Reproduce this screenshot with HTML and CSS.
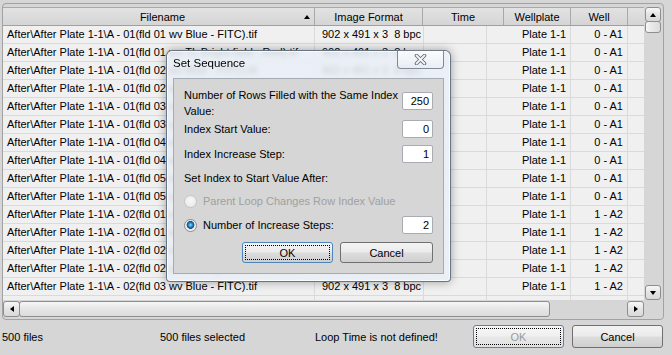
FILE: index.html
```html
<!DOCTYPE html>
<html lang="en">
<head>
  <meta charset="UTF-8">
  <title>Set Sequence</title>
  <link rel="stylesheet" href="styles.css">
</head>
<body>
  <div class="window">

    <div class="table-box">
      <div class="table-view">
        <div class="head">
          <div class="sorted"><span class="head-text">Filename</span><span class="tri-up"></span></div>
          <div>Image Format</div>
          <div>Time</div>
          <div>Wellplate</div>
          <div>Well</div>
          <div class="filler"></div>
        </div>

        <div class="row"><div>After\After Plate 1-1\A - 01(fld 01 wv Blue - FITC).tif</div><div class="fmt">902 x 491 x 3  8 bpc</div><div></div><div class="num">Plate 1-1</div><div class="num">0 - A1</div><div></div></div>
        <div class="row"><div>After\After Plate 1-1\A - 01(fld 01 wv TL Bright field - Red).tif</div><div class="fmt">902 x 491 x 3  8 bpc</div><div></div><div class="num">Plate 1-1</div><div class="num">0 - A1</div><div></div></div>
        <div class="row"><div>After\After Plate 1-1\A - 01(fld 02 wv Blue - FITC).tif</div><div class="fmt">902 x 491 x 3  8 bpc</div><div></div><div class="num">Plate 1-1</div><div class="num">0 - A1</div><div></div></div>
        <div class="row"><div>After\After Plate 1-1\A - 01(fld 02 wv TL Bright field - Red).tif</div><div class="fmt">902 x 491 x 3  8 bpc</div><div></div><div class="num">Plate 1-1</div><div class="num">0 - A1</div><div></div></div>
        <div class="row"><div>After\After Plate 1-1\A - 01(fld 03 wv Blue - FITC).tif</div><div class="fmt">902 x 491 x 3  8 bpc</div><div></div><div class="num">Plate 1-1</div><div class="num">0 - A1</div><div></div></div>
        <div class="row"><div>After\After Plate 1-1\A - 01(fld 03 wv TL Bright field - Red).tif</div><div class="fmt">902 x 491 x 3  8 bpc</div><div></div><div class="num">Plate 1-1</div><div class="num">0 - A1</div><div></div></div>
        <div class="row"><div>After\After Plate 1-1\A - 01(fld 04 wv Blue - FITC).tif</div><div class="fmt">902 x 491 x 3  8 bpc</div><div></div><div class="num">Plate 1-1</div><div class="num">0 - A1</div><div></div></div>
        <div class="row"><div>After\After Plate 1-1\A - 01(fld 04 wv TL Bright field - Red).tif</div><div class="fmt">902 x 491 x 3  8 bpc</div><div></div><div class="num">Plate 1-1</div><div class="num">0 - A1</div><div></div></div>
        <div class="row"><div>After\After Plate 1-1\A - 01(fld 05 wv Blue - FITC).tif</div><div class="fmt">902 x 491 x 3  8 bpc</div><div></div><div class="num">Plate 1-1</div><div class="num">0 - A1</div><div></div></div>
        <div class="row"><div>After\After Plate 1-1\A - 01(fld 05 wv TL Bright field - Red).tif</div><div class="fmt">902 x 491 x 3  8 bpc</div><div></div><div class="num">Plate 1-1</div><div class="num">0 - A1</div><div></div></div>
        <div class="row"><div>After\After Plate 1-1\A - 02(fld 01 wv Blue - FITC).tif</div><div class="fmt">902 x 491 x 3  8 bpc</div><div></div><div class="num">Plate 1-1</div><div class="num">1 - A2</div><div></div></div>
        <div class="row"><div>After\After Plate 1-1\A - 02(fld 01 wv TL Bright field - Red).tif</div><div class="fmt">902 x 491 x 3  8 bpc</div><div></div><div class="num">Plate 1-1</div><div class="num">1 - A2</div><div></div></div>
        <div class="row"><div>After\After Plate 1-1\A - 02(fld 02 wv Blue - FITC).tif</div><div class="fmt">902 x 491 x 3  8 bpc</div><div></div><div class="num">Plate 1-1</div><div class="num">1 - A2</div><div></div></div>
        <div class="row"><div>After\After Plate 1-1\A - 02(fld 02 wv TL Bright field - Red).tif</div><div class="fmt">902 x 491 x 3  8 bpc</div><div></div><div class="num">Plate 1-1</div><div class="num">1 - A2</div><div></div></div>
        <div class="row"><div>After\After Plate 1-1\A - 02(fld 03 wv Blue - FITC).tif</div><div class="fmt">902 x 491 x 3  8 bpc</div><div></div><div class="num">Plate 1-1</div><div class="num">1 - A2</div><div></div></div>
        <div class="row"><div></div><div class="fmt"></div><div></div><div class="num"></div><div class="num"></div><div></div></div>
      </div>

      <div class="vscroll">
        <div class="sb-btn v-btn"><span class="tri-up"></span></div>
        <div class="sb-thumb v-thumb"></div>
        <div class="sb-track"></div>
        <div class="sb-btn v-btn"><span class="tri-down"></span></div>
      </div>

      <div class="hscroll">
        <div class="sb-btn h-btn"><span class="tri-left"></span></div>
        <div class="sb-thumb h-thumb"></div>
        <div class="sb-track"></div>
        <div class="sb-btn h-btn"><span class="tri-right"></span></div>
      </div>
      <div class="corner"></div>
    </div>

    <div class="footer">
      <span class="count">500 files</span>
      <span class="selected">500 files selected</span>
      <span class="status">Loop Time is not defined!</span>
      <button class="btn btn-default" disabled><span class="focus">OK</span></button>
      <button class="btn">Cancel</button>
    </div>

    <!-- modal dialog on top of the table -->
    <div class="dialog">
      <div class="title-bar">
        <span class="title">Set Sequence</span>
        <div class="close-btn">
          <svg width="13" height="11" viewBox="0 0 13 11">
            <path d="M2.5 1.5 L10.5 9.5 M10.5 1.5 L2.5 9.5" stroke="#5f6b76" stroke-width="3.6" stroke-linecap="round"/>
            <path d="M2.5 1.5 L10.5 9.5 M10.5 1.5 L2.5 9.5" stroke="#f4f6f8" stroke-width="1.8" stroke-linecap="round"/>
          </svg>
        </div>
      </div>

      <div class="client">
        <div class="field two">
          <label>Number of Rows Filled with the Same Index<br>Value:</label>
          <div class="input">250</div>
        </div>
        <div class="field start">
          <label>Index Start Value:</label>
          <div class="input">0</div>
        </div>
        <div class="field">
          <label>Index Increase Step:</label>
          <div class="input">1</div>
        </div>
        <div class="field text-row">
          <label>Set Index to Start Value After:</label>
        </div>
        <div class="field text-row">
          <span class="radio-wrap"><span class="radio disabled"></span><span class="radio-label disabled">Parent Loop Changes Row Index Value</span></span>
        </div>
        <div class="field">
          <span class="radio-wrap"><span class="radio checked"></span><span class="radio-label">Number of Increase Steps:</span></span>
          <div class="input">2</div>
        </div>
        <div class="dialog-buttons">
          <button class="btn dlg-btn btn-default"><span class="focus">OK</span></button>
          <button class="btn dlg-btn cancel">Cancel</button>
        </div>
      </div>
    </div>

  </div>
</body>
</html>
```

FILE: styles.css
```css
* {
  box-sizing: border-box;
}

body {
  margin: 0;
  width: 672px;
  height: 355px;
  overflow: hidden;
  background-color: #d6d6d6;
  color: #000;
  font-family: "Liberation Sans", Arial, sans-serif;
  font-size: 11px;
}

.window {
  position: relative;
  height: 355px;
  padding: 3px 8px 0 2px;
}

/* table with its scrollbars */

.table-box {
  display: grid;
  grid-template-columns: 641px 17px;
  grid-template-rows: 293px 17px;
  height: 317px;
  padding: 3px 2px 2px 0;
  border: 1px solid #a2a2a2;
  border-radius: 4px;
}

.table-view {
  overflow: hidden;
  background-color: #f0f0f0;
}

.head {
  display: grid;
  grid-template-columns: 312px 108px 81px 67px 57px 1fr;
  height: 19px;
  background: linear-gradient(#e2e2e2, #d5d5d5);
  border-top: 1px solid #a9a9a9;
  border-bottom: 1px solid #a0a0a0;
}

.head div {
  display: flex;
  align-items: center;
  justify-content: center;
  border-right: 1px solid #a9a9a9;
}

.head .filler {
  border-right: none;
}

.head .sorted {
  padding-left: 18px;
}

.head-text {
  flex: 1;
  text-align: center;
}

.sorted .tri-up {
  margin-right: 4px;
}

.row {
  display: grid;
  grid-template-columns: 312px 109px 63px 84px 57px 1fr;
  height: 18px;
  border-bottom: 1px solid #dadada;
}

.row div {
  padding: 0 4px;
  line-height: 17px;
  white-space: pre;
  overflow: hidden;
  border-right: 1px solid #dadada;
}

.row .fmt {
  padding-left: 7px;
}

.row .num {
  text-align: right;
}

.row div:last-child {
  border-right: none;
}

/* arrows */

.tri-up, .tri-down, .tri-left, .tri-right {
  display: block;
  width: 0;
  height: 0;
}

.tri-up {
  border-left: 3.5px solid transparent;
  border-right: 3.5px solid transparent;
  border-bottom: 4px solid #000;
}

.tri-down {
  border-left: 3.5px solid transparent;
  border-right: 3.5px solid transparent;
  border-top: 4px solid #000;
}

.tri-left {
  border-top: 3.5px solid transparent;
  border-bottom: 3.5px solid transparent;
  border-right: 4px solid #000;
}

.tri-right {
  border-top: 3.5px solid transparent;
  border-bottom: 3.5px solid transparent;
  border-left: 4px solid #000;
}

/* scrollbars */

.vscroll {
  display: flex;
  flex-direction: column;
  padding-left: 1px;
}

.hscroll {
  display: flex;
  padding-top: 1px;
}

.sb-btn {
  display: flex;
  align-items: center;
  justify-content: center;
  border: 1px solid #8e8e8e;
  border-radius: 3px;
  background: linear-gradient(#f7f7f7, #e4e4e4 50%, #d9d9d9);
}

.v-btn {
  height: 15px;
}

.h-btn {
  width: 17px;
  height: 16px;
}

.sb-thumb {
  border: 1px solid #8e8e8e;
  border-radius: 3px;
  background: linear-gradient(#f6f6f6, #e6e6e6 50%, #dcdcdc);
}

.v-thumb {
  height: 12px;
  margin-top: -1px;
  background: linear-gradient(90deg, #f6f6f6, #e6e6e6 50%, #dcdcdc);
}

.h-thumb {
  width: 531px;
  height: 16px;
  margin-left: -1px;
}

.sb-track {
  flex: 1;
}

/* bottom bar */

.footer {
  display: flex;
  align-items: center;
  height: 23px;
  margin-top: 5px;
}

.count {
  width: 158px;
}

.selected {
  width: 155px;
}

.status {
  flex: 1;
}

.btn {
  width: 91px;
  height: 23px;
  margin-left: 8px;
  padding: 0;
  border: 1px solid #707070;
  border-radius: 3px;
  background: linear-gradient(#f3f3f3, #ebebeb 48%, #dddddd 52%, #cfcfcf);
  color: #000;
  font-family: "Liberation Sans", Arial, sans-serif;
  font-size: 11px;
}

.footer .btn:last-child {
  margin-right: 1px;
}

.btn-default {
  border-color: #4e84b8;
  padding: 2px;
}

.btn:disabled {
  background: linear-gradient(#f6f6f6, #f0f0f0 48%, #e8e8e8 52%, #e2e2e2);
  color: #9a9a9a;
}

.focus {
  display: flex;
  align-items: center;
  justify-content: center;
  height: 100%;
  border: 1px dotted #000;
}

/* dialog */

.dialog {
  position: absolute;
  left: 166px;
  top: 50px;
  width: 285px;
  height: 232px;
  display: flex;
  flex-direction: column;
  padding: 0 6px 7px 6px;
  border: 1px solid rgba(60, 75, 95, 0.75);
  border-radius: 6px 6px 4px 4px;
  background: rgba(234, 240, 247, 0.84);
  backdrop-filter: blur(2.5px);
  box-shadow: inset 0 0 0 1px rgba(255, 255, 255, 0.7), 0 0 10px rgba(0, 0, 0, 0.35);
}

.title-bar {
  display: flex;
  align-items: flex-start;
  height: 27px;
}

.title {
  margin-top: 6px;
  font-size: 11.5px;
  color: #000;
}

.close-btn {
  display: flex;
  align-items: center;
  justify-content: center;
  width: 47px;
  height: 19px;
  margin-left: auto;
  margin-top: -1px;
  border: 1px solid rgba(80, 92, 105, 0.7);
  border-radius: 0 0 4px 4px;
  background: linear-gradient(rgba(255, 255, 255, 0.8), rgba(232, 238, 244, 0.65));
}

.client {
  flex: 1;
  padding: 8px 10px 0 10px;
  border: 1px solid #a4abb3;
  background-color: #d6d6d6;
}

.field {
  display: flex;
  align-items: center;
  justify-content: space-between;
  height: 18px;
  margin-top: 7px;
}

.field.two {
  align-items: flex-start;
  height: 32px;
  margin-top: 0;
  line-height: 16px;
}

.field.two .input {
  margin-top: 5px;
}

.field.start {
  margin-top: 1px;
}

.field.text-row {
  height: 16px;
}

.input {
  width: 31px;
  height: 18px;
  padding-right: 3px;
  line-height: 16px;
  text-align: right;
  background-color: #fff;
  border: 1px solid #a9adb3;
  border-radius: 2px;
}

.radio-wrap {
  display: flex;
  align-items: center;
}

.radio {
  width: 13px;
  height: 13px;
  margin-right: 6px;
  border-radius: 50%;
  border: 1px solid #8a8a8a;
  background: radial-gradient(circle at 50% 50%, #f0f0f0, #dcdcdc);
}

.radio.disabled {
  border-color: #c5c5c5;
  background: radial-gradient(circle at 50% 40%, #f8f8f8, #e6e6e6);
}

.radio.checked {
  background: radial-gradient(circle at 50% 45%, #9fe2ff 0, #2f8fd0 1.8px, #0f4f86 3.6px, #e8e8e8 4.2px, #f7f7f7 6px);
}

.radio-label.disabled {
  color: #a0a0a0;
}

.dialog-buttons {
  display: flex;
  justify-content: flex-end;
  margin-top: 8px;
}

.dlg-btn {
  height: 21px;
}

.dlg-btn.cancel {
  width: 93px;
  margin-left: 7px;
}
```
